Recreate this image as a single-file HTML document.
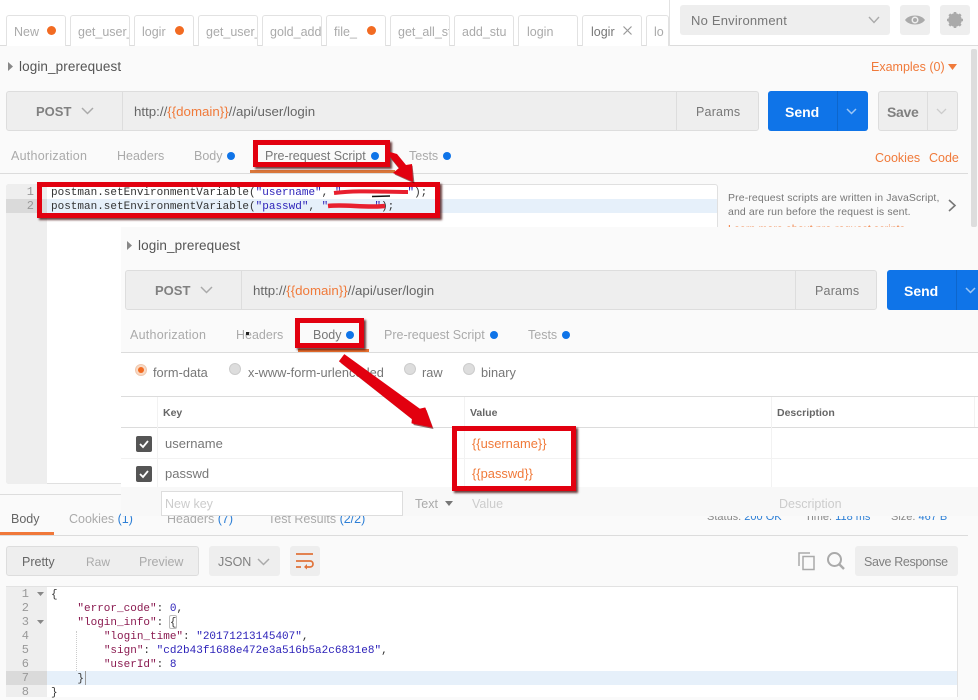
<!DOCTYPE html>
<html><head><meta charset="utf-8">
<style>
html,body{margin:0;padding:0}
body{width:978px;height:697px;overflow:hidden;position:relative;background:#fafafa;font-family:"Liberation Sans",sans-serif;font-size:13px;color:#808080}
div,span.a{position:absolute;box-sizing:border-box}
.t{position:absolute;white-space:nowrap;line-height:16px;height:16px}
.o{color:#f07a3a}
.tab{top:15px;height:31px;width:60px;border:1px solid #e2e2e2;border-bottom:none;background:#fff;border-radius:3px 3px 0 0;overflow:hidden;padding:8px 0 0 7px;color:#aaa;font-size:12.5px;white-space:nowrap;line-height:16px}
.dot{width:8px;height:8px;border-radius:50%;background:#0f74e8}
.odot{width:9px;height:9px;border-radius:50%;background:#f26b22}
.m{position:absolute;white-space:pre;font-family:"Liberation Mono",monospace;font-size:11px;line-height:14px;height:14px;color:#333}
.ln{position:absolute;width:29px;text-align:right;left:5px;font-family:"Liberation Mono",monospace;font-size:12px;line-height:14px;color:#999}
.btn{background:#eee;border:1px solid #ddd;border-radius:3px}
.red{border:5px solid #e2000f;box-shadow:2px 2px 2px rgba(60,0,0,.75)}
.radio{width:12px;height:12px;border-radius:50%;background:#ddd;border:1px solid #ccc}
.cb{width:16px;height:16px;background:#555;border-radius:2px}
.k{color:#8a1a50}.s{color:#2a1fb8}.n{color:#2a1fb8}
svg{position:absolute;overflow:visible}
</style></head><body>

<!-- top bar -->
<div style="left:0;top:0;width:978px;height:46px;background:#fff;border-bottom:1px solid #dcdcdc"></div>
<div class="tab" style="left:6px">New</div><div class="odot" style="left:47px;top:26px"></div>
<div class="tab" style="left:70px">get_user_i</div>
<div class="tab" style="left:134px">logir</div><div class="odot" style="left:175px;top:26px"></div>
<div class="tab" style="left:198px">get_user_i</div>
<div class="tab" style="left:262px">gold_add</div>
<div class="tab" style="left:326px">file_</div><div class="odot" style="left:367px;top:26px"></div>
<div class="tab" style="left:390px">get_all_stu</div>
<div class="tab" style="left:454px">add_stu</div>
<div class="tab" style="left:518px;padding-left:8px">login</div>
<div class="tab" style="left:582px;color:#777;padding-left:8px">logir</div>
<svg style="left:623px;top:26px" width="9" height="9"><path d="M.5.5l8 8M8.500.5l-8 8" stroke="#999" stroke-width="1.200" fill="none"/></svg>
<div class="tab" style="left:646px;width:23px">lo</div>
<div style="left:669px;top:0;width:1px;height:46px;background:#e2e2e2"></div>

<div style="left:680px;top:5px;width:210px;height:30px;background:#eee;border-radius:3px"></div>
<div class="t" style="left:691px;top:13px;color:#777;font-size:13px;letter-spacing:.2px">No Environment</div>
<svg style="left:868px;top:16px" width="12" height="8"><path d="M1 1l5 5.500 5-5.500" stroke="#aaa" stroke-width="1.400" fill="none"/></svg>
<div style="left:900px;top:5px;width:30px;height:30px;background:#eee;border-radius:3px"></div>
<svg style="left:905px;top:13px" width="20" height="14"><path d="M0 7C4 1 16 1 20 7 16 13 4 13 0 7Z" fill="#aaa"/><circle cx="10" cy="7" r="3.500" fill="#eee"/><circle cx="10" cy="7" r="2" fill="#aaa"/></svg>
<div style="left:940px;top:5px;width:30px;height:30px;background:#eee;border-radius:3px"></div>
<svg style="left:947px;top:12px" width="16" height="16"><circle cx="8" cy="8" r="5" fill="none" stroke="#aaa" stroke-width="3.500"/><path d="M8 0v16M0 8h16M2.300 2.300l11.400 11.400M13.700 2.300L2.300 13.700" stroke="#aaa" stroke-width="2.600"/></svg>

<div style="left:971px;top:49px;width:6px;height:178px;background:#ddd;border-radius:2px"></div>

<!-- base request -->
<svg style="left:8px;top:62px" width="5" height="9"><path d="M0 0l5 4.500L0 9z" fill="#888"/></svg>
<div class="t" style="left:19px;top:59px;color:#555;font-size:13.500px;letter-spacing:.1px">login_prerequest</div>
<div class="t o" style="left:871px;top:59px;font-size:12.500px">Examples (0)</div>
<svg style="left:948px;top:64px" width="9" height="6"><path d="M0 0h9L4.500 6z" fill="#f07a3a"/></svg>

<div class="btn" style="left:6px;top:91px;width:753px;height:40px"></div>
<div style="left:122px;top:91px;width:1px;height:40px;background:#ddd"></div>
<div style="left:676px;top:91px;width:1px;height:40px;background:#ddd"></div>
<div class="t" style="left:36px;top:104px;color:#808080;font-size:13px;font-weight:bold">POST</div>
<svg style="left:81px;top:107px" width="13" height="8"><path d="M1 1l5.500 5.500L12 1" stroke="#aaa" stroke-width="1.500" fill="none"/></svg>
<div class="t" style="left:134px;top:104px;color:#666;font-size:13.300px">http://<span class="o">{{domain}}</span>//api/user/login</div>
<div class="t" style="left:696px;top:104px;color:#777;font-size:12.500px;letter-spacing:.2px">Params</div>
<div style="left:768px;top:91px;width:100px;height:40px;background:#0f74e8;border-radius:3px"></div>
<div style="left:837px;top:91px;width:1px;height:40px;background:#0d66cc"></div>
<div class="t" style="left:785px;top:104px;color:#fff;font-size:14px;font-weight:bold">Send</div>
<svg style="left:846px;top:108px" width="11" height="7"><path d="M1 1l4.500 4.500L10 1" stroke="#9cc6f5" stroke-width="1.500" fill="none"/></svg>
<div class="btn" style="left:878px;top:91px;width:80px;height:40px"></div>
<div style="left:927px;top:91px;width:1px;height:40px;background:#ddd"></div>
<div class="t" style="left:887px;top:104px;color:#808080;font-size:14px;font-weight:bold;letter-spacing:-.3px">Save</div>
<svg style="left:936px;top:108px" width="11" height="7"><path d="M1 1l4.500 4.500L10 1" stroke="#ccc" stroke-width="1.300" fill="none"/></svg>

<div class="t" style="left:11px;top:148px;color:#aaa;font-size:12.500px;letter-spacing:.25px">Authorization</div>
<div class="t" style="left:117px;top:148px;color:#aaa;font-size:12.500px">Headers</div>
<div class="t" style="left:194px;top:148px;color:#aaa;font-size:12.500px">Body</div><div class="dot" style="left:227px;top:152px"></div>
<div class="t" style="left:265px;top:148px;color:#777;font-size:12.500px">Pre-request Script</div><div class="dot" style="left:371px;top:152px"></div>
<div class="t" style="left:409px;top:148px;color:#aaa;font-size:12.500px">Tests</div><div class="dot" style="left:443px;top:152px"></div>
<div class="t o" style="left:875px;top:150px;font-size:12.500px">Cookies</div>
<div class="t o" style="left:929px;top:150px;font-size:12.500px">Code</div>
<div style="left:0;top:173px;width:968px;height:1px;background:#dcdcdc"></div>
<div style="left:250px;top:170px;width:145px;height:3px;background:#d9763a"></div>

<!-- editor -->
<div style="left:6px;top:184px;width:712px;height:300px;background:#fff;border:1px solid #e0e0e0;border-radius:3px"></div>
<div style="left:6px;top:184px;width:41px;height:300px;background:#eee;border-radius:3px 0 0 3px"></div>
<div style="left:6px;top:199px;width:41px;height:14px;background:#dadada"></div>
<div style="left:47px;top:199px;width:670px;height:14px;background:#e6f0fa"></div>
<div class="ln" style="top:185px">1</div><div class="ln" style="top:199px">2</div>
<div class="m" style="left:51px;top:186px">postman.setEnvironmentVariable(<span class="s">"username"</span>, <span class="s">"          "</span>);</div>
<div class="m" style="left:51px;top:200px">postman.setEnvironmentVariable(<span class="s">"passwd"</span>, <span class="s">"       "</span>);</div>
<svg style="left:330px;top:186px" width="90" height="24"><path d="M4 7C30 4 50 6 78 6" stroke="#e8202f" stroke-width="4" fill="none"/><path d="M42 10.500l18-.5" stroke="#111" stroke-width="1.500"/><path d="M-2 20C15 18 35 22 55 20" stroke="#e8202f" stroke-width="4.500" fill="none"/></svg>
<div class="t" style="left:728px;top:190px;font-size:10.500px;color:#777;letter-spacing:.12px">Pre-request scripts are written in JavaScript,</div>
<div class="t" style="left:728px;top:204px;font-size:10.500px;color:#777;letter-spacing:.12px">and are run before the request is sent.</div>
<div class="t o" style="left:728px;top:221px;font-size:10.500px;letter-spacing:.12px">Learn more about pre-request scripts</div>
<svg style="left:948px;top:199px" width="9" height="13"><path d="M1 1l6 5.500L1 12" stroke="#777" stroke-width="1.600" fill="none"/></svg>

<!-- response -->
<div style="left:0;top:494px;width:978px;height:203px;background:#fafafa;border-top:1px solid #ddd"></div>
<div class="t" style="left:11px;top:511px;color:#666;font-size:12.500px">Body</div>
<div class="t" style="left:69px;top:511px;color:#aaa;font-size:12.500px">Cookies <span style="color:#2d7fd6">(1)</span></div>
<div class="t" style="left:167px;top:511px;color:#aaa;font-size:12.500px">Headers <span style="color:#2d7fd6">(7)</span></div>
<div class="t" style="left:268px;top:511px;color:#aaa;font-size:12.500px">Test Results <span style="color:#2d7fd6">(2/2)</span></div>
<div class="t" style="left:707px;top:509px;color:#888;font-size:11px">Status: <span style="color:#2d7fd6">200 OK</span></div>
<div class="t" style="left:805px;top:509px;color:#888;font-size:11px">Time: <span style="color:#2d7fd6">118 ms</span></div>
<div class="t" style="left:891px;top:509px;color:#888;font-size:11px">Size: <span style="color:#2d7fd6">467 B</span></div>
<div style="left:0;top:535px;width:968px;height:1px;background:#dcdcdc"></div>
<div style="left:0;top:532px;width:54px;height:3px;background:#f0783a"></div>

<div class="btn" style="left:6px;top:546px;width:193px;height:30px"></div>
<div class="t" style="left:22px;top:554px;color:#666;font-size:12.500px">Pretty</div>
<div class="t" style="left:86px;top:554px;color:#aaa;font-size:12px">Raw</div>
<div class="t" style="left:139px;top:554px;color:#aaa;font-size:12.500px">Preview</div>
<div style="left:209px;top:546px;width:71px;height:30px;background:#eee;border-radius:3px"></div>
<div class="t" style="left:218px;top:554px;color:#808080;font-size:12.500px">JSON</div>
<svg style="left:257px;top:558px" width="13" height="8"><path d="M1 1l5.500 5.500L12 1" stroke="#aaa" stroke-width="1.500" fill="none"/></svg>
<div style="left:290px;top:546px;width:30px;height:30px;background:#eee;border-radius:3px"></div>
<svg style="left:296px;top:552px" width="18" height="18"><path d="M0 2h17M0 9h14c4 0 4 6 0 6H9M0 15h5" stroke="#e0733a" stroke-width="1.700" fill="none"/><path d="M11 12l-3 3 3 2.500" fill="#e0733a"/></svg>
<svg style="left:798px;top:552px" width="18" height="18"><path d="M1 14V1h11" stroke="#aaa" stroke-width="1.500" fill="none"/><rect x="5" y="4.500" width="11" height="13" fill="none" stroke="#aaa" stroke-width="1.500"/></svg>
<svg style="left:827px;top:552px" width="18" height="18"><circle cx="7.500" cy="7.500" r="6.500" fill="none" stroke="#aaa" stroke-width="2"/><path d="M12 12l5 5" stroke="#aaa" stroke-width="2.400"/></svg>
<div style="left:855px;top:546px;width:103px;height:30px;background:#eee;border-radius:3px"></div>
<div class="t" style="left:864px;top:554px;color:#808080;font-size:12.500px;letter-spacing:-.35px">Save Response</div>

<div style="left:6px;top:586px;width:952px;height:111px;background:#fff;border:1px solid #e2e2e2;border-bottom:none"></div>
<div style="left:6px;top:587px;width:41px;height:110px;background:#eee"></div>
<div style="left:6px;top:671px;width:41px;height:14px;background:#dadada"></div>
<div style="left:47px;top:671px;width:910px;height:14px;background:#e6f0fa"></div>
<div class="ln" style="top:587px;left:0">1</div><div class="ln" style="top:601px;left:0">2</div><div class="ln" style="top:615px;left:0">3</div><div class="ln" style="top:629px;left:0">4</div><div class="ln" style="top:643px;left:0">5</div><div class="ln" style="top:657px;left:0">6</div><div class="ln" style="top:671px;left:0">7</div><div class="ln" style="top:685px;left:0">8</div>
<svg style="left:37px;top:592px" width="7" height="4"><path d="M0 0h7L3.500 4z" fill="#888"/></svg>
<svg style="left:37px;top:620px" width="7" height="4"><path d="M0 0h7L3.500 4z" fill="#888"/></svg>
<div class="m" style="left:51px;top:588px">{</div>
<div class="m" style="left:51px;top:602px">    <span class="k">"error_code"</span>: <span class="n">0</span>,</div>
<div class="m" style="left:51px;top:616px">    <span class="k">"login_info"</span>: {</div>
<div style="left:169px;top:615px;width:8px;height:14px;border:1px solid #bbb;border-radius:2px"></div>
<div class="m" style="left:51px;top:630px">        <span class="k">"login_time"</span>: <span class="s">"20171213145407"</span>,</div>
<div class="m" style="left:51px;top:644px">        <span class="k">"sign"</span>: <span class="s">"cd2b43f1688e472e3a516b5a2c6831e8"</span>,</div>
<div class="m" style="left:51px;top:658px">        <span class="k">"userId"</span>: <span class="n">8</span></div>
<div class="m" style="left:51px;top:672px">    }</div>
<div style="left:85px;top:671px;width:1px;height:14px;background:#999"></div>
<div class="m" style="left:51px;top:686px">}</div>
<div style="left:76px;top:631px;height:40px;border-left:1px dotted #ccc"></div>

<!-- overlay panel -->
<div style="left:121px;top:227px;width:857px;height:125px;background:#fafafa"></div>
<div style="left:121px;top:352px;width:857px;height:135px;background:#fff;border-top:1px solid #dcdcdc"></div>
<div style="left:121px;top:487px;width:857px;height:29px;background:#f8f8f8"></div>

<svg style="left:127px;top:241px" width="5" height="9"><path d="M0 0l5 4.500L0 9z" fill="#888"/></svg>
<div class="t" style="left:138px;top:238px;color:#555;font-size:13.500px;letter-spacing:.1px">login_prerequest</div>
<div class="btn" style="left:125px;top:270px;width:752px;height:40px"></div>
<div style="left:241px;top:270px;width:1px;height:40px;background:#ddd"></div>
<div style="left:795px;top:270px;width:1px;height:40px;background:#ddd"></div>
<div class="t" style="left:155px;top:283px;color:#808080;font-size:13px;font-weight:bold">POST</div>
<svg style="left:200px;top:286px" width="13" height="8"><path d="M1 1l5.500 5.500L12 1" stroke="#aaa" stroke-width="1.500" fill="none"/></svg>
<div class="t" style="left:253px;top:283px;color:#666;font-size:13.300px">http://<span class="o">{{domain}}</span>//api/user/login</div>
<div class="t" style="left:815px;top:283px;color:#777;font-size:12.500px;letter-spacing:.2px">Params</div>
<div style="left:887px;top:270px;width:91px;height:40px;background:#0f74e8;border-radius:3px 0 0 3px"></div>
<div style="left:956px;top:270px;width:1px;height:40px;background:#0d66cc"></div>
<div class="t" style="left:904px;top:283px;color:#fff;font-size:14px;font-weight:bold">Send</div>
<svg style="left:965px;top:287px" width="11" height="7"><path d="M1 1l4.500 4.500L10 1" stroke="#9cc6f5" stroke-width="1.500" fill="none"/></svg>

<div class="t" style="left:130px;top:327px;color:#aaa;font-size:12.500px;letter-spacing:.25px">Authorization</div>
<div class="t" style="left:236px;top:327px;color:#aaa;font-size:12.500px">Headers</div>
<div style="left:246px;top:332px;width:3px;height:3px;background:#222"></div>
<div class="t" style="left:313px;top:327px;color:#777;font-size:12.500px">Body</div><div class="dot" style="left:346px;top:331px"></div>
<div class="t" style="left:384px;top:327px;color:#aaa;font-size:12.500px">Pre-request Script</div><div class="dot" style="left:490px;top:331px"></div>
<div class="t" style="left:528px;top:327px;color:#aaa;font-size:12.500px">Tests</div><div class="dot" style="left:562px;top:331px"></div>
<div style="left:298px;top:349px;width:71px;height:3px;background:#e8702f"></div>

<div class="radio" style="left:135px;top:364px;background:#f8d9c4;border-color:#f0c8ae"></div>
<div style="left:138px;top:367px;width:6px;height:6px;border-radius:50%;background:#f26b22"></div>
<div class="t" style="left:153px;top:365px;color:#777;font-size:12.800px">form-data</div>
<div class="radio" style="left:229px;top:363px"></div>
<div class="t" style="left:248px;top:365px;color:#777;font-size:12.800px">x-www-form-urlencoded</div>
<div class="radio" style="left:404px;top:363px"></div>
<div class="t" style="left:422px;top:365px;color:#777;font-size:12.800px">raw</div>
<div class="radio" style="left:463px;top:363px"></div>
<div class="t" style="left:481px;top:365px;color:#777;font-size:12.800px">binary</div>

<div style="left:121px;top:396px;width:857px;height:1px;background:#dcdcdc"></div>
<div style="left:121px;top:427px;width:857px;height:1px;background:#dcdcdc"></div>
<div style="left:121px;top:458px;width:857px;height:1px;background:#f2f2f2"></div>
<div style="left:157px;top:397px;width:1px;height:90px;background:#f2f2f2"></div>
<div style="left:464px;top:397px;width:1px;height:90px;background:#f2f2f2"></div>
<div style="left:771px;top:397px;width:1px;height:90px;background:#f2f2f2"></div>
<div style="left:974px;top:397px;width:1px;height:30px;background:#f2f2f2"></div>
<div class="t" style="left:163px;top:405px;color:#666;font-size:10.500px;font-weight:bold">Key</div>
<div class="t" style="left:470px;top:405px;color:#666;font-size:10.500px;font-weight:bold">Value</div>
<div class="t" style="left:777px;top:405px;color:#666;font-size:10.500px;font-weight:bold">Description</div>

<div class="cb" style="left:136px;top:436px"></div>
<svg style="left:139px;top:440px" width="10" height="8"><path d="M1 4l3 3 5-6" stroke="#fff" stroke-width="1.800" fill="none"/></svg>
<div class="cb" style="left:136px;top:466px"></div>
<svg style="left:139px;top:470px" width="10" height="8"><path d="M1 4l3 3 5-6" stroke="#fff" stroke-width="1.800" fill="none"/></svg>
<div class="t" style="left:165px;top:436px;color:#777;font-size:13px">username</div>
<div class="t" style="left:165px;top:466px;color:#777;font-size:13px">passwd</div>
<div class="t o" style="left:472px;top:436px;font-size:12.900px">{{username}}</div>
<div class="t o" style="left:472px;top:466px;font-size:12.900px">{{passwd}}</div>

<div style="left:161px;top:491px;width:242px;height:25px;background:#fff;border:1px solid #ddd"></div>
<div class="t" style="left:165px;top:496px;color:#ccc;font-size:12.500px">New key</div>
<div class="t" style="left:415px;top:496px;color:#aaa;font-size:12.500px">Text</div>
<svg style="left:445px;top:501px" width="8" height="5"><path d="M0 0h8L4 5z" fill="#777"/></svg>
<div class="t" style="left:472px;top:496px;color:#ccc;font-size:12.500px">Value</div>
<div class="t" style="left:779px;top:496px;color:#ccc;font-size:12.500px">Description</div>

<!-- annotations -->
<div class="red" style="left:253px;top:140px;width:137px;height:27px"></div>
<div class="red" style="left:37px;top:182px;width:403px;height:36px"></div>
<div class="red" style="left:295px;top:318px;width:69px;height:30px"></div>
<div class="red" style="left:452px;top:426px;width:124px;height:65px"></div>
<svg style="left:0;top:0" width="978" height="697">
<path d="M390 153l6 2 10 12 5-3 2 18-20-9 6-4-9-11z" fill="#500" opacity=".6" transform="translate(1.500 1.500)"/>
<path d="M390 152l7 2 9 11 6-1 1 18-20-9 6-5-9-11z" fill="#e2000f"/>
<path d="M344.400 354.800L419.600 409.200 425 408 432 427 412 423 412.400 418.800 339.600 361.200Z" fill="#500" opacity=".6" transform="translate(1.500 2)"/>
<path d="M344.400 354.800L419.600 409.200 425 408 432 427 412 423 412.400 418.800 339.600 361.200Z" fill="#e2000f" stroke="#e2000f" stroke-width="1" stroke-linejoin="round"/>
</svg>
</body></html>
